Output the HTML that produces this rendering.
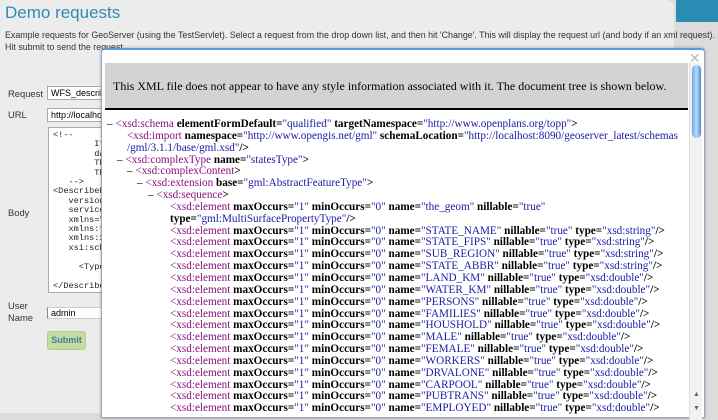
<!DOCTYPE html>
<html><head><style>
*{margin:0;padding:0;box-sizing:border-box}
body{width:718px;height:413px;overflow:hidden;background:#dcdcdc;font-family:"Liberation Sans",sans-serif;position:relative}
.page{position:absolute;left:0;top:0;width:674px;height:413px;background:#ececec;border-top-right-radius:8px}
.hdr{position:absolute;left:676px;top:0;width:42px;height:22px;background:#2b8cb3}
h1{position:absolute;left:5px;top:3px;font-size:17px;font-weight:normal;color:#2e8bb8}
.desc{position:absolute;left:5px;top:29px;font-size:8.9px;line-height:12px;color:#333;white-space:nowrap}
.lbl{position:absolute;left:8px;font-size:9.4px;color:#333;line-height:12px}
.in{position:absolute;left:47px;background:#fff;border:1px solid #aaa;font-size:9px;padding-left:3px;overflow:hidden;white-space:nowrap}
.ta{position:absolute;left:48px;top:127px;width:60px;height:166px;background:#fff;border:1px solid #aaa;font-family:"Liberation Mono",monospace;font-size:8.6px;line-height:9.4px;white-space:pre;overflow:hidden;padding:3px 0 0 4px;color:#222}
.btn{position:absolute;left:47px;top:331px;width:39px;height:19px;background:#c6dba0;border:1px solid #b5cc8e;border-radius:3px;font-size:9px;font-weight:bold;color:#3a7fa0;text-align:center;line-height:17px}
.dlg{position:absolute;left:101px;top:48px;width:604px;height:370px;background:#fff;border:1px solid #8fa8c8;border-top:2px solid #5a9ad8;border-radius:4px 4px 0 0;box-shadow:0 0 3px rgba(0,0,0,.3)}
.x{position:absolute;left:587px;top:0px;font-size:14px;color:#bbb}
.gray{position:absolute;left:3px;top:13px;width:583px;height:47px;background:#d3d3d3;border-bottom:2px solid #000;font-family:"Liberation Serif",serif;font-size:12px;padding:16px 0 0 8px;color:#000;white-space:nowrap}
.sb{position:absolute;left:587px;top:13px;width:13px;height:357px;background:#f2f2f2;border-left:1px solid #ddd}
.th{position:absolute;left:2px;top:2px;width:9px;height:73px;background:linear-gradient(to right,#6ea9e6,#b8dcf8,#4f8fd8);border-radius:5px}
.ar{position:absolute;left:3px;font-size:7px;color:#666}
.xml{position:absolute;left:5px;top:69px;font-family:"Liberation Serif",serif;font-size:11.2px;line-height:11.85px;white-space:nowrap;color:#000;font-weight:bold}
.xml div{height:11.85px}
.i0{padding-left:0}.i1{padding-left:10px}.i2{padding-left:20px}.i3{padding-left:30px}.i4{padding-left:41px}.i6{padding-left:63px}
.t{color:#881280;font-weight:normal}
.v{color:#1a1aa6;font-weight:normal}
.n{font-weight:normal}
</style></head><body>
<div class="page"></div><div class="hdr"></div>
<h1>Demo requests</h1>
<div class="desc">Example requests for GeoServer (using the TestServlet). Select a request from the drop down list, and then hit 'Change'. This will display the request url (and body if an xml request).<br>Hit submit to send the request</div>
<div class="lbl" style="top:88px">Request</div>
<div class="in" style="top:86px;width:60px;height:14px;line-height:12px">WFS_describeFeatureType</div>
<div class="lbl" style="top:109px">URL</div>
<div class="in" style="top:108px;width:60px;height:14px;line-height:12px">http://localhost</div>
<div class="ta">&lt;!--
        If
        data
        This
        The
   --&gt;
&lt;DescribeFe
   version
   service
   xmlns="h
   xmlns:to
   xmlns:xs
   xsi:sche

     &lt;TypeN

&lt;/Describe</div>
<div class="lbl" style="top:207px">Body</div>
<div class="lbl" style="top:300px">User<br>Name</div>
<div class="in" style="top:307px;width:60px;height:12px;line-height:11px;border-color:#ccc;border-left:1px solid #888">admin</div>
<div class="btn">Submit</div>
<div class="dlg">
<div class="x">✕</div>
<div class="gray">This XML file does not appear to have any style information associated with it. The document tree is shown below.</div>
<div class="sb"><div class="th"></div><div class="ar" style="top:328px">▲</div><div class="ar" style="top:342px">▼</div></div>
<div class="xml">
<div class="i0"><span class="n">–</span> <span class="t">&lt;xsd:schema</span> elementFormDefault=<span class="v">"qualified"</span> targetNamespace=<span class="v">"http://www.openplans.org/topp"</span>&gt;</div>
<div class="i2"><span class="t">&lt;xsd:import</span> namespace=<span class="v">"http://www.opengis.net/gml"</span> schemaLocation=<span class="v">"http://localhost:8090/geoserver_latest/schemas</span></div>
<div class="i2"><span class="v">/gml/3.1.1/base/gml.xsd"</span>/&gt;</div>
<div class="i1"><span class="n">–</span> <span class="t">&lt;xsd:complexType</span> name=<span class="v">"statesType"</span>&gt;</div>
<div class="i2"><span class="n">–</span> <span class="t">&lt;xsd:complexContent</span>&gt;</div>
<div class="i3"><span class="n">–</span> <span class="t">&lt;xsd:extension</span> base=<span class="v">"gml:AbstractFeatureType"</span>&gt;</div>
<div class="i4"><span class="n">–</span> <span class="t">&lt;xsd:sequence</span>&gt;</div>
<div class="i6"><span class="t">&lt;xsd:element</span> maxOccurs=<span class="v">"1"</span> minOccurs=<span class="v">"0"</span> name=<span class="v">"the_geom"</span> nillable=<span class="v">"true"</span></div>
<div class="i6">type=<span class="v">"gml:MultiSurfacePropertyType"</span>/&gt;</div>
<div class="i6"><span class="t">&lt;xsd:element</span> maxOccurs=<span class="v">"1"</span> minOccurs=<span class="v">"0"</span> name=<span class="v">"STATE_NAME"</span> nillable=<span class="v">"true"</span> type=<span class="v">"xsd:string"</span>/&gt;</div>
<div class="i6"><span class="t">&lt;xsd:element</span> maxOccurs=<span class="v">"1"</span> minOccurs=<span class="v">"0"</span> name=<span class="v">"STATE_FIPS"</span> nillable=<span class="v">"true"</span> type=<span class="v">"xsd:string"</span>/&gt;</div>
<div class="i6"><span class="t">&lt;xsd:element</span> maxOccurs=<span class="v">"1"</span> minOccurs=<span class="v">"0"</span> name=<span class="v">"SUB_REGION"</span> nillable=<span class="v">"true"</span> type=<span class="v">"xsd:string"</span>/&gt;</div>
<div class="i6"><span class="t">&lt;xsd:element</span> maxOccurs=<span class="v">"1"</span> minOccurs=<span class="v">"0"</span> name=<span class="v">"STATE_ABBR"</span> nillable=<span class="v">"true"</span> type=<span class="v">"xsd:string"</span>/&gt;</div>
<div class="i6"><span class="t">&lt;xsd:element</span> maxOccurs=<span class="v">"1"</span> minOccurs=<span class="v">"0"</span> name=<span class="v">"LAND_KM"</span> nillable=<span class="v">"true"</span> type=<span class="v">"xsd:double"</span>/&gt;</div>
<div class="i6"><span class="t">&lt;xsd:element</span> maxOccurs=<span class="v">"1"</span> minOccurs=<span class="v">"0"</span> name=<span class="v">"WATER_KM"</span> nillable=<span class="v">"true"</span> type=<span class="v">"xsd:double"</span>/&gt;</div>
<div class="i6"><span class="t">&lt;xsd:element</span> maxOccurs=<span class="v">"1"</span> minOccurs=<span class="v">"0"</span> name=<span class="v">"PERSONS"</span> nillable=<span class="v">"true"</span> type=<span class="v">"xsd:double"</span>/&gt;</div>
<div class="i6"><span class="t">&lt;xsd:element</span> maxOccurs=<span class="v">"1"</span> minOccurs=<span class="v">"0"</span> name=<span class="v">"FAMILIES"</span> nillable=<span class="v">"true"</span> type=<span class="v">"xsd:double"</span>/&gt;</div>
<div class="i6"><span class="t">&lt;xsd:element</span> maxOccurs=<span class="v">"1"</span> minOccurs=<span class="v">"0"</span> name=<span class="v">"HOUSHOLD"</span> nillable=<span class="v">"true"</span> type=<span class="v">"xsd:double"</span>/&gt;</div>
<div class="i6"><span class="t">&lt;xsd:element</span> maxOccurs=<span class="v">"1"</span> minOccurs=<span class="v">"0"</span> name=<span class="v">"MALE"</span> nillable=<span class="v">"true"</span> type=<span class="v">"xsd:double"</span>/&gt;</div>
<div class="i6"><span class="t">&lt;xsd:element</span> maxOccurs=<span class="v">"1"</span> minOccurs=<span class="v">"0"</span> name=<span class="v">"FEMALE"</span> nillable=<span class="v">"true"</span> type=<span class="v">"xsd:double"</span>/&gt;</div>
<div class="i6"><span class="t">&lt;xsd:element</span> maxOccurs=<span class="v">"1"</span> minOccurs=<span class="v">"0"</span> name=<span class="v">"WORKERS"</span> nillable=<span class="v">"true"</span> type=<span class="v">"xsd:double"</span>/&gt;</div>
<div class="i6"><span class="t">&lt;xsd:element</span> maxOccurs=<span class="v">"1"</span> minOccurs=<span class="v">"0"</span> name=<span class="v">"DRVALONE"</span> nillable=<span class="v">"true"</span> type=<span class="v">"xsd:double"</span>/&gt;</div>
<div class="i6"><span class="t">&lt;xsd:element</span> maxOccurs=<span class="v">"1"</span> minOccurs=<span class="v">"0"</span> name=<span class="v">"CARPOOL"</span> nillable=<span class="v">"true"</span> type=<span class="v">"xsd:double"</span>/&gt;</div>
<div class="i6"><span class="t">&lt;xsd:element</span> maxOccurs=<span class="v">"1"</span> minOccurs=<span class="v">"0"</span> name=<span class="v">"PUBTRANS"</span> nillable=<span class="v">"true"</span> type=<span class="v">"xsd:double"</span>/&gt;</div>
<div class="i6"><span class="t">&lt;xsd:element</span> maxOccurs=<span class="v">"1"</span> minOccurs=<span class="v">"0"</span> name=<span class="v">"EMPLOYED"</span> nillable=<span class="v">"true"</span> type=<span class="v">"xsd:double"</span>/&gt;</div>
</div>
</div>
</body></html>
